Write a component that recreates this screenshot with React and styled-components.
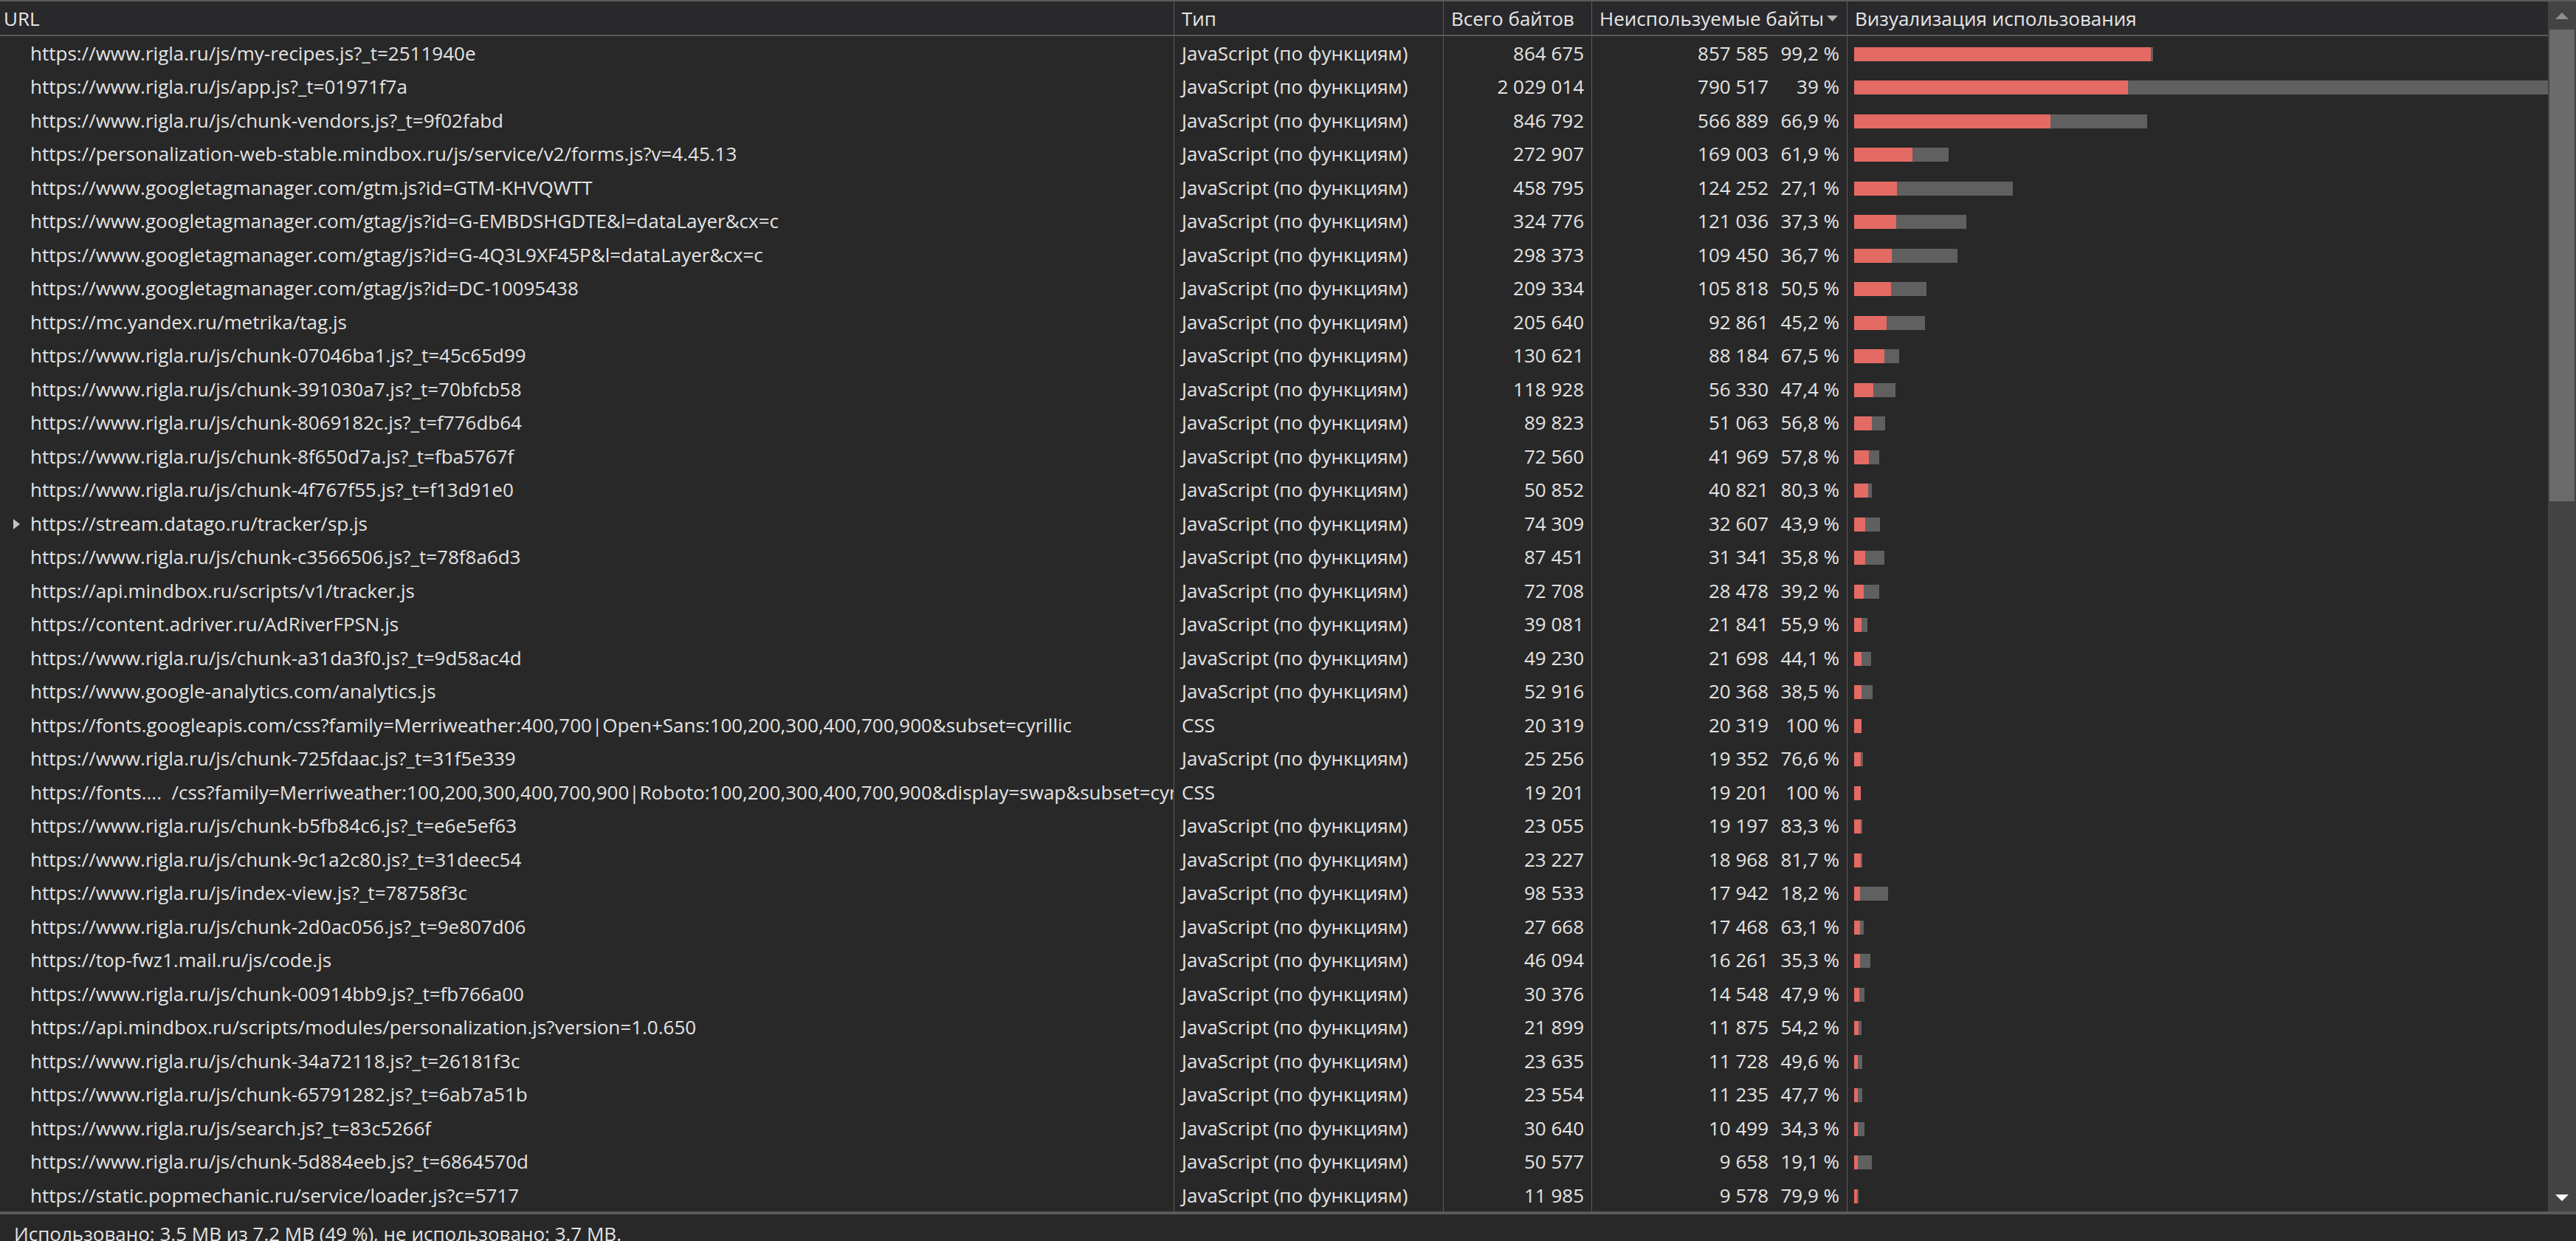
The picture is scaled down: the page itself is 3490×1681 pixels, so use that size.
import React from "react";
import styled, { createGlobalStyle } from "styled-components";

const MAX_BAR = 951;

const rows = [
  ["https://www.rigla.ru/js/my-recipes.js?_t=2511940e", "js", 864675, 857585, "99,2 %"],
  ["https://www.rigla.ru/js/app.js?_t=01971f7a", "js", 2029014, 790517, "39 %"],
  ["https://www.rigla.ru/js/chunk-vendors.js?_t=9f02fabd", "js", 846792, 566889, "66,9 %"],
  ["https://personalization-web-stable.mindbox.ru/js/service/v2/forms.js?v=4.45.13", "js", 272907, 169003, "61,9 %"],
  ["https://www.googletagmanager.com/gtm.js?id=GTM-KHVQWTT", "js", 458795, 124252, "27,1 %"],
  ["https://www.googletagmanager.com/gtag/js?id=G-EMBDSHGDTE&l=dataLayer&cx=c", "js", 324776, 121036, "37,3 %"],
  ["https://www.googletagmanager.com/gtag/js?id=G-4Q3L9XF45P&l=dataLayer&cx=c", "js", 298373, 109450, "36,7 %"],
  ["https://www.googletagmanager.com/gtag/js?id=DC-10095438", "js", 209334, 105818, "50,5 %"],
  ["https://mc.yandex.ru/metrika/tag.js", "js", 205640, 92861, "45,2 %"],
  ["https://www.rigla.ru/js/chunk-07046ba1.js?_t=45c65d99", "js", 130621, 88184, "67,5 %"],
  ["https://www.rigla.ru/js/chunk-391030a7.js?_t=70bfcb58", "js", 118928, 56330, "47,4 %"],
  ["https://www.rigla.ru/js/chunk-8069182c.js?_t=f776db64", "js", 89823, 51063, "56,8 %"],
  ["https://www.rigla.ru/js/chunk-8f650d7a.js?_t=fba5767f", "js", 72560, 41969, "57,8 %"],
  ["https://www.rigla.ru/js/chunk-4f767f55.js?_t=f13d91e0", "js", 50852, 40821, "80,3 %"],
  ["https://stream.datago.ru/tracker/sp.js", "js", 74309, 32607, "43,9 %", true],
  ["https://www.rigla.ru/js/chunk-c3566506.js?_t=78f8a6d3", "js", 87451, 31341, "35,8 %"],
  ["https://api.mindbox.ru/scripts/v1/tracker.js", "js", 72708, 28478, "39,2 %"],
  ["https://content.adriver.ru/AdRiverFPSN.js", "js", 39081, 21841, "55,9 %"],
  ["https://www.rigla.ru/js/chunk-a31da3f0.js?_t=9d58ac4d", "js", 49230, 21698, "44,1 %"],
  ["https://www.google-analytics.com/analytics.js", "js", 52916, 20368, "38,5 %"],
  ["https://fonts.googleapis.com/css?family=Merriweather:400,700|Open+Sans:100,200,300,400,700,900&subset=cyrillic", "css", 20319, 20319, "100 %"],
  ["https://www.rigla.ru/js/chunk-725fdaac.js?_t=31f5e339", "js", 25256, 19352, "76,6 %"],
  ["https://fonts....\u00a0\u00a0/css?family=Merriweather:100,200,300,400,700,900|Roboto:100,200,300,400,700,900&display=swap&subset=cyrillic", "css", 19201, 19201, "100 %"],
  ["https://www.rigla.ru/js/chunk-b5fb84c6.js?_t=e6e5ef63", "js", 23055, 19197, "83,3 %"],
  ["https://www.rigla.ru/js/chunk-9c1a2c80.js?_t=31deec54", "js", 23227, 18968, "81,7 %"],
  ["https://www.rigla.ru/js/index-view.js?_t=78758f3c", "js", 98533, 17942, "18,2 %"],
  ["https://www.rigla.ru/js/chunk-2d0ac056.js?_t=9e807d06", "js", 27668, 17468, "63,1 %"],
  ["https://top-fwz1.mail.ru/js/code.js", "js", 46094, 16261, "35,3 %"],
  ["https://www.rigla.ru/js/chunk-00914bb9.js?_t=fb766a00", "js", 30376, 14548, "47,9 %"],
  ["https://api.mindbox.ru/scripts/modules/personalization.js?version=1.0.650", "js", 21899, 11875, "54,2 %"],
  ["https://www.rigla.ru/js/chunk-34a72118.js?_t=26181f3c", "js", 23635, 11728, "49,6 %"],
  ["https://www.rigla.ru/js/chunk-65791282.js?_t=6ab7a51b", "js", 23554, 11235, "47,7 %"],
  ["https://www.rigla.ru/js/search.js?_t=83c5266f", "js", 30640, 10499, "34,3 %"],
  ["https://www.rigla.ru/js/chunk-5d884eeb.js?_t=6864570d", "js", 50577, 9658, "19,1 %"],
  ["https://static.popmechanic.ru/service/loader.js?c=5717", "js", 11985, 9578, "79,9 %"],
];

const maxTotal = Math.max(...rows.map((r) => r[2]));

// 1 234 567 style, like the devtools ru locale
const fmt = (n) => String(n).replace(/\B(?=(\d{3})+(?!\d))/g, " ");

const typeLabel = (t) => (t === "css" ? "CSS" : "JavaScript (по функциям)");

const App = () => {
  return (
    <>
      <GlobalStyle />
      <Screen>
        <Panel>
          <Table>
            <HeaderRow>
              <HeaderCell $first>URL</HeaderCell>
              <HeaderCell>Тип</HeaderCell>
              <HeaderCell>Всего байтов</HeaderCell>
              <HeaderCell>
                Неиспользуемые байты
                <SortArrow width="15" height="8" viewBox="0 0 15 8">
                  <path d="M0 0 H15 L7.5 8 Z" fill="#b3b3b3" />
                </SortArrow>
              </HeaderCell>
              <HeaderCell>Визуализация использования</HeaderCell>
            </HeaderRow>

            <Body>
              {rows.map(([url, type, total, unused, pct, expandable], i) => (
                <Row key={i}>
                  <UrlCell>
                    <ExpanderSlot>{expandable && <Expander />}</ExpanderSlot>
                    {url}
                  </UrlCell>
                  <TypeCell>{typeLabel(type)}</TypeCell>
                  <NumCell>{fmt(total)}</NumCell>
                  <NumCell>
                    {fmt(unused)}
                    <Pct>{pct}</Pct>
                  </NumCell>
                  <VizCell>
                    <BarTrack style={{ width: (total / maxTotal) * MAX_BAR }}>
                      <BarUnused style={{ width: (unused / maxTotal) * MAX_BAR }} />
                    </BarTrack>
                  </VizCell>
                </Row>
              ))}
            </Body>
          </Table>

          <Scrollbar>
            <ScrollButton>
              <ArrowUp />
            </ScrollButton>
            <Thumb />
            <ScrollSpacer />
            <ScrollButton>
              <ArrowDown />
            </ScrollButton>
          </Scrollbar>
        </Panel>

        <StatusBar>
          Использовано: 3.5 MB из 7.2 MB (49 %), не использовано: 3.7 MB.
        </StatusBar>
      </Screen>
    </>
  );
};

export default App;

// стили
const GlobalStyle = createGlobalStyle`
  html, body {
    margin: 0;
    padding: 0;
    background: #282828;
    overflow: hidden;
  }
  * {
    box-sizing: border-box;
  }
`;

const COLUMNS = "1590px 365px 201px 346px 950px";
const LINE = "#5b5b5b";

const Screen = styled.div`
  width: 3490px;
  height: 1681px;
  overflow: hidden;
  display: flex;
  flex-direction: column;
  background: #282828;
  color: #e3e3e3;
  font-family: "Open Sans", "Noto Sans", sans-serif;
  font-size: 26px;
`;

const Panel = styled.div`
  flex: none;
  height: 1641px;
  display: flex;
  border-top: 2px solid ${LINE};
`;

const Table = styled.div`
  flex: 1;
  min-width: 0;
  display: flex;
  flex-direction: column;
  overflow: hidden;
`;

const HeaderRow = styled.div`
  flex: none;
  display: grid;
  grid-template-columns: ${COLUMNS};
  height: 47px;
  background: #29292c;
  border-bottom: 2px solid ${LINE};
`;

const HeaderCell = styled.div`
  display: flex;
  align-items: center;
  padding-left: ${({ $first }) => ($first ? "5px" : "10px")};
  border-left: ${({ $first }) => ($first ? "none" : `1px solid ${LINE}`)};
  white-space: nowrap;
  overflow: hidden;
  color: #e6e6e6;
`;

const SortArrow = styled.svg`
  flex: none;
  margin-left: 4px;
  margin-top: 1px;
`;

const Body = styled.div`
  flex: 1;
  overflow: hidden;
`;

const Row = styled.div`
  display: grid;
  grid-template-columns: ${COLUMNS};
  height: 45.5px;
`;

const Cell = styled.div`
  display: flex;
  align-items: center;
  white-space: nowrap;
  overflow: hidden;
  border-left: 1px solid ${LINE};
`;

const UrlCell = styled(Cell)`
  border-left: none;
  padding-left: 18px;
`;

const ExpanderSlot = styled.span`
  flex: none;
  width: 23px;
  display: flex;
  align-items: center;
`;

const Expander = styled.span`
  width: 0;
  height: 0;
  margin-top: 2px;
  border-top: 7px solid transparent;
  border-bottom: 7px solid transparent;
  border-left: 9px solid #c2c2c2;
`;

const TypeCell = styled(Cell)`
  padding-left: 10px;
`;

const NumCell = styled(Cell)`
  justify-content: flex-end;
  padding-right: 10px;
`;

const Pct = styled.span`
  flex: none;
  width: 96px;
  text-align: right;
`;

const VizCell = styled(Cell)`
  padding-left: 9px;
  padding-top: 3px;
`;

const BarTrack = styled.div`
  flex: none;
  height: 19px;
  background: #606060;
`;

const BarUnused = styled.div`
  height: 100%;
  background: #e46a64;
`;

const Scrollbar = styled.div`
  flex: none;
  width: 38px;
  display: flex;
  flex-direction: column;
  background: #434343;
`;

const ScrollButton = styled.div`
  flex: none;
  height: 38px;
  display: flex;
  align-items: center;
  justify-content: center;
`;

const ArrowUp = styled.span`
  width: 0;
  height: 0;
  border-left: 9px solid transparent;
  border-right: 9px solid transparent;
  border-bottom: 9px solid #8e8e8e;
`;

const ArrowDown = styled.span`
  width: 0;
  height: 0;
  border-left: 9px solid transparent;
  border-right: 9px solid transparent;
  border-top: 9px solid #ffffff;
`;

const Thumb = styled.div`
  flex: none;
  height: 639px;
  margin: 0 2px;
  background: #6b6b6b;
`;

const ScrollSpacer = styled.div`
  flex: 1;
`;

const StatusBar = styled.div`
  flex: none;
  border-top: 4px solid ${LINE};
  padding: 8px 19px 0;
  white-space: nowrap;
  background: #282828;
`;
